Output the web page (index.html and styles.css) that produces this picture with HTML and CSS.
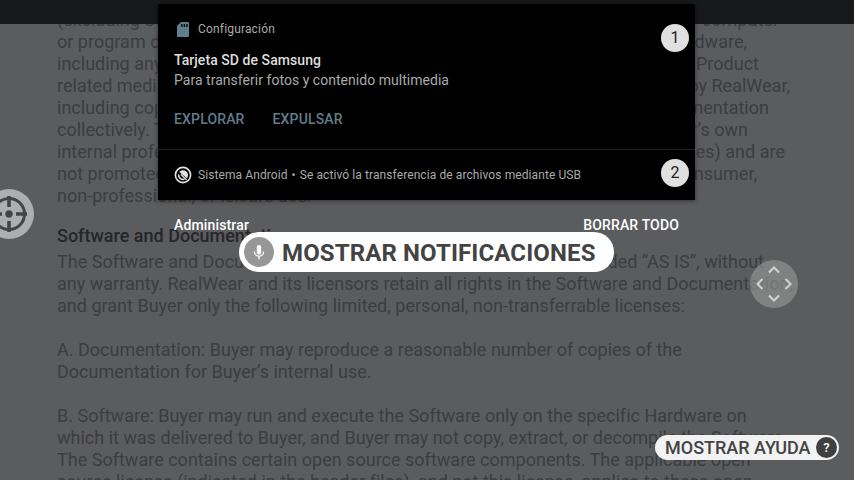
FILE: index.html
```html
<!DOCTYPE html>
<html lang="es">
<head>
<meta charset="utf-8">
<title>Notificaciones</title>
<link rel="stylesheet" href="styles.css">
</head>
<body>
<div class="status"></div>
<main class="document">
  <p class="line split" style="width:722px"><span>(excluding S</span><span>or computer</span></p>
  <p class="line split" style="width:690px"><span>or program c</span><span>hardware,</span></p>
  <p class="line split" style="width:702px"><span>including any</span><span>Product</span></p>
  <p class="line split" style="width:733px"><span>related media</span><span>by RealWear,</span></p>
  <p class="line split" style="width:712px"><span>including cop</span><span>Documentation</span></p>
  <p class="line split" style="width:691px"><span>collectively. T</span><span>Buyer’s own</span></p>
  <p class="line split" style="width:728px"><span>internal profes</span><span>purposes) and are</span></p>
  <p class="line split" style="width:700px"><span>not promoted</span><span>consumer,</span></p>
  <p class="line">non-professional, or leisure use.</p>
  <h2>Software and Documentation</h2>
  <p class="line split" style="width:707px"><span>The Software and Documentation</span><span>are provided “AS IS”, without</span></p>
  <p class="line">any warranty. RealWear and its licensors retain all rights in the Software and Documentation,</p>
  <p class="line">and grant Buyer only the following limited, personal, non-transferrable licenses:</p>
  <p class="line gap">A. Documentation: Buyer may reproduce a reasonable number of copies of the</p>
  <p class="line">Documentation for Buyer’s internal use.</p>
  <p class="line gap">B. Software: Buyer may run and execute the Software only on the specific Hardware on</p>
  <p class="line">which it was delivered to Buyer, and Buyer may not copy, extract, or decompile the Software.</p>
  <p class="line">The Software contains certain open source software components. The applicable open</p>
  <p class="line">source license (indicated in the header files), and not this license, applies to these open</p>
</main>

<section class="shade">
  <div class="panel">
    <article class="card">
      <header class="app">
        <svg class="sd" viewBox="0 0 12 15"><path fill="#607d8b" d="M4 0h7a1 1 0 0 1 1 1v13a1 1 0 0 1-1 1H1a1 1 0 0 1-1-1V4z"/><path fill="#000" d="M4.3 2h1.3v3H4.3zM6.8 2h1.3v3H6.8zM9.3 2h1.3v3H9.3z"/></svg>
        <span>Configuración</span>
      </header>
      <h3>Tarjeta SD de Samsung</h3>
      <p class="detail">Para transferir fotos y contenido multimedia</p>
      <div class="actions"><span>EXPLORAR</span><span>EXPULSAR</span></div>
      <b class="badge first">1</b>
    </article>
    <article class="card system">
      <svg class="android" viewBox="0 0 18 18"><circle cx="9" cy="9" r="7.6" fill="none" stroke="#e4e4e4" stroke-width="1.6"/><path fill="#e4e4e4" d="M5.2 6A5 5 0 0 1 14 9q0 1.800-1 3.200z"/><path d="M4.700 8.300a4.500 4.500 0 0 0 5.700 5" fill="none" stroke="#e4e4e4" stroke-width="1.500"/><path d="M7 8.500l5.500 5.300" stroke="#e4e4e4" stroke-width="1.400"/></svg>
      <span class="usb">Sistema Android<i>•</i>Se activó la transferencia de archivos mediante USB</span>
      <b class="badge second">2</b>
    </article>
  </div>
  <footer class="foot"><span>Administrar</span><span>BORRAR TODO</span></footer>
</section>

<div class="command">
  <svg viewBox="0 0 30 30"><circle cx="15" cy="15" r="15" fill="#979797"/><rect x="12.8" y="8" width="4.4" height="9.6" rx="2.2" fill="#fff"/><path d="M10.4 14.6a4.6 4.6 0 0 0 9.2 0M15 19v3.2" fill="none" stroke="#fff" stroke-width="1.3"/></svg>
  <span>MOSTRAR NOTIFICACIONES</span>
</div>

<svg class="target" viewBox="0 0 50 50"><circle cx="25" cy="25" r="25" fill="#adaeaf"/><g fill="none" stroke="#434445" stroke-width="3"><circle cx="25" cy="25" r="15.5"/><path stroke-width="3.6" d="M25 7v11M25 32v11M7 25h11M32 25h11"/></g><circle cx="25" cy="25" r="3.7" fill="#434445"/></svg>

<svg class="pad" viewBox="0 0 48 48"><circle cx="24" cy="24" r="24" fill="#999" fill-opacity=".6"/><path d="M19 12.500l5-5 5 5M19 35.500l5 5 5-5M12.500 19l-5 5 5 5M35.500 19l5 5-5 5" fill="none" stroke="#d4d4d4" stroke-width="2"/></svg>

<div class="help"><span>MOSTRAR AYUDA</span><b>?</b></div>
</body>
</html>
```
FILE: styles.css
```css
* { box-sizing: border-box; }
body { margin: 0; width: 854px; height: 480px; overflow: hidden; position: relative; background: #5b5c5e; font-family: Roboto, "Liberation Sans", sans-serif; }
p, h2, h3 { margin: 0; }
.status { height: 24px; background: #17181a; }
.document { height: 456px; overflow: hidden; padding-left: 57px; color: #3c3d3f; display: flow-root; }
.line { height: 22px; line-height: 22px; font-size: 18px; letter-spacing: .012px; white-space: nowrap; }
.line:first-child { margin-top: -15px; }
.split { display: flex; justify-content: space-between; }
.gap { margin-top: 22px; }
h2 { margin: 18px 0 4px; height: 22px; line-height: 22px; font-size: 18px; font-weight: 500; color: #252628; }
.shade { position: absolute; left: 158px; top: 4px; width: 537px; }
.panel { height: 196px; background: #000; border-radius: 2px 2px 0 0; box-shadow: 0 1px 4px rgba(0,0,0,.45); }
.card { position: relative; height: 145px; padding: 17px 16px 0; }
.app { display: flex; align-items: center; height: 16px; font-size: 12px; letter-spacing: .17px; color: #aaa; gap: 9px; padding-left: 3px; }
.sd { width: 12px; height: 15px; }
h3 { margin-top: 13px; height: 20px; line-height: 20px; font-size: 14px; font-weight: 500; letter-spacing: .06px; color: #dedede; }
.detail { height: 20px; line-height: 20px; font-size: 14px; letter-spacing: .03px; color: #aaa; }
.actions { display: flex; gap: 28px; margin-top: 19px; line-height: 20px; font-size: 14px; font-weight: 500; letter-spacing: .15px; color: #607d8b; }
.system { height: 51px; border-top: 1px solid #202020; display: flex; align-items: center; padding-top: 0; gap: 6px; }
.android { width: 18px; height: 18px; }
.usb { font-size: 12px; letter-spacing: .09px; color: #aaa; }
.usb i { font-style: normal; margin: 0 4px; }
.badge { position: absolute; right: 6px; width: 28px; height: 28px; border-radius: 50%; background: #e0e0e0; color: #202020; font-size: 16px; font-weight: 400; line-height: 27px; text-align: center; }
.first { top: 20px; }
.second { top: 9px; }
.foot { display: flex; justify-content: space-between; padding: 15px 16px 0; line-height: 20px; font-size: 14px; font-weight: 500; letter-spacing: .15px; color: #fff; }
.command { position: absolute; left: 239px; top: 232px; width: 375px; height: 40px; border-radius: 20px; background: #fff; display: flex; align-items: center; gap: 8px; padding: 1px 0 0 5px; white-space: nowrap; font-size: 24px; font-weight: 700; letter-spacing: .12px; color: #434343; }
.command svg { width: 30px; height: 30px; flex: none; margin-top: -1px; }
.target { position: absolute; left: -16px; top: 189px; width: 50px; height: 50px; }
.pad { position: absolute; left: 750px; top: 260px; width: 48px; height: 48px; }
.help { position: absolute; left: 655px; top: 435px; width: 184px; height: 25px; border-radius: 13px; background: #f2f2f2; display: flex; align-items: center; justify-content: space-between; padding: 0 2px 0 10px; font-size: 18px; font-weight: 500; color: #434343; white-space: nowrap; }
.help b { width: 21px; height: 21px; line-height: 21px; border-radius: 50%; background: #3f3f3f; color: #fff; font-size: 13px; font-weight: 500; text-align: center; }
```
